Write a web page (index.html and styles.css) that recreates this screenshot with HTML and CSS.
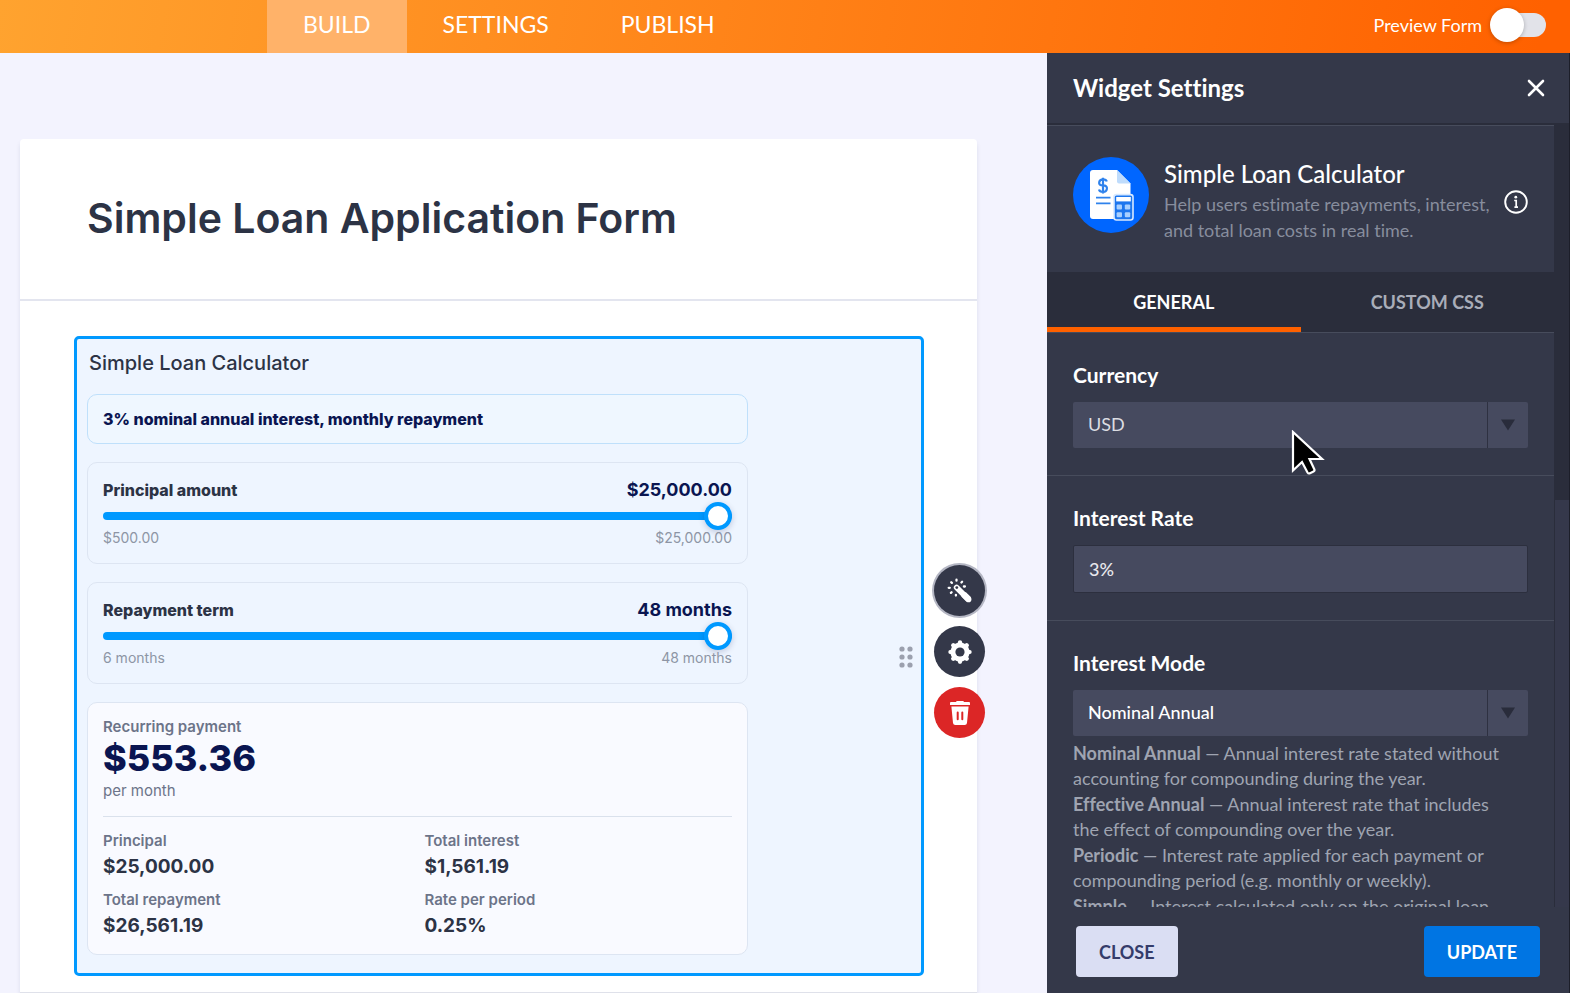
FILE: index.html
```html
<!DOCTYPE html>
<html lang="en">
<head>
<meta charset="utf-8">
<title>Form Builder</title>
<link rel="stylesheet" href="styles.css">
</head>
<body>
<header class="topbar">
  <nav class="topnav">
    <a class="topnav-link active" href="#build">BUILD</a>
    <a class="topnav-link" href="#settings">SETTINGS</a>
    <a class="topnav-link" href="#publish">PUBLISH</a>
  </nav>
  <label class="preview">Preview Form
    <input class="switch" type="checkbox">
  </label>
</header>
<div class="workspace">
  <main class="canvas">
    <div class="form-card">
      <h1 class="form-title">Simple Loan Application Form</h1>
      <section class="field">
        <h2 class="field-title">Simple Loan Calculator</h2>
        <div class="calc">
          <p class="info">3% nominal annual interest, monthly repayment</p>
          <div class="range-card">
            <div class="range-head"><label for="principal">Principal amount</label><output class="range-value">$25,000.00</output></div>
            <input class="range" id="principal" type="range" min="500" max="25000" value="25000">
            <div class="range-limits"><span>$500.00</span><span>$25,000.00</span></div>
          </div>
          <div class="range-card">
            <div class="range-head"><label for="term">Repayment term</label><output class="range-value">48 months</output></div>
            <input class="range" id="term" type="range" min="6" max="48" value="48">
            <div class="range-limits"><span>6 months</span><span>48 months</span></div>
          </div>
          <div class="result">
            <p class="result-label">Recurring payment</p>
            <p class="result-main">$553.36</p>
            <p class="result-unit">per month</p>
            <dl class="totals">
              <div><dt>Principal</dt><dd>$25,000.00</dd></div>
              <div><dt>Total interest</dt><dd>$1,561.19</dd></div>
              <div><dt>Total repayment</dt><dd>$26,561.19</dd></div>
              <div><dt>Rate per period</dt><dd>0.25%</dd></div>
            </dl>
          </div>
        </div>
        <svg class="grip" width="14" height="22" viewBox="0 0 14 22" fill="#9ba0ae" aria-hidden="true"><circle cx="3" cy="3" r="2.6"/><circle cx="11" cy="3" r="2.6"/><circle cx="3" cy="11" r="2.6"/><circle cx="11" cy="11" r="2.6"/><circle cx="3" cy="19" r="2.6"/><circle cx="11" cy="19" r="2.6"/></svg>
        <div class="actions">
          <button class="action focused" type="button" aria-label="Widget settings">
            <svg width="26" height="26" viewBox="0 0 26 26"><path d="M9.600 9.400 20.600 20.400" stroke="#fff" stroke-width="5.600" stroke-linecap="round"/><path d="M16.500 16.300 21.800 21.600" stroke="#fff" stroke-width="6.400" stroke-linejoin="round"/><path d="M21.600 21.400h.01" stroke="#fff" stroke-width="5.600" stroke-linecap="round"/><circle cx="9.800" cy="9.600" r="1.400" fill="#343849"/><g stroke="#fff" stroke-width="2.300" stroke-linecap="round"><path d="M9.500 1.700V2.700M4.200 4.200 4.900 4.900M15.100 3.800 14.400 4.500M1.700 9.800H2.800M16.900 8.500H17.900M3.900 14.900 4.600 14.200M8.900 16.800V17.600"/></g></svg>
          </button>
          <button class="action" type="button" aria-label="Properties">
            <svg width="26" height="26" viewBox="0 0 26 26"><g fill="#fff"><circle cx="13" cy="13" r="9.600"/><g id="t"><path d="M10.200 5 11.400 1.800Q13 .8 14.600 1.800L15.800 5ZM10.200 21 11.400 24.200Q13 25.200 14.600 24.200L15.800 21Z"/><path d="M10.200 5 11.400 1.800Q13 .8 14.600 1.800L15.800 5ZM10.200 21 11.400 24.200Q13 25.200 14.600 24.200L15.800 21Z" transform="rotate(90 13 13)"/></g><use href="#t" transform="rotate(45 13 13)"/></g><circle cx="13" cy="13" r="4.600" fill="#343849"/></svg>
          </button>
          <button class="action danger" type="button" aria-label="Delete">
            <svg width="26" height="26" viewBox="0 0 26 26"><path d="M9 2Q9.200 1 10.200 1h5.600Q16.800 1 17 2H22q1 0 1 1v2H3V3q0-1 1-1ZM4.400 6.400H21.600L20 23q-.3 2-2.300 2H8.300Q6.300 25 6 23Z" fill="#fff"/><path d="M10.700 12.400v6.800M15.300 12.400v6.800" stroke="#dc2626" stroke-width="2" stroke-linecap="round"/></svg>
          </button>
        </div>
      </section>
      <div class="next-field"></div>
    </div>
  </main>
  <aside class="panel">
    <div class="panel-head">
      <h2 class="panel-title">Widget Settings</h2>
      <button class="panel-x" type="button" aria-label="Close panel"><svg width="18" height="18" viewBox="0 0 18 18"><path d="M2 2 16 16M16 2 2 16" stroke="#fff" stroke-width="2.600" stroke-linecap="round"/></svg></button>
    </div>
    <div class="panel-scroll">
      <div class="panel-content">
        <div class="widget">
          <svg class="widget-icon" width="76" height="76" viewBox="0 0 76 76" aria-hidden="true"><circle cx="38" cy="38" r="38" fill="#0066ff"/><path d="M20 13H44L57.500 26.500V62H20q-3 0-3-3V16q0-3 3-3Z" fill="#fff"/><path d="M44 13 57.500 26.500H46q-2 0-2-2Z" fill="#bfdcfc"/><path d="M33.800 24.500Q33.200 22.400 30 22.400T26.200 25.300 30 28.400 33.900 31.800 30 34.900 26 32.400M30 20.800V36.600" fill="none" stroke="#2f82ec" stroke-width="2.200"/><path d="M23 40.600H37.500M23 46.300H37.500" stroke="#2f82ec" stroke-width="1.800"/><rect x="41" y="37.600" width="19" height="25.400" rx="2.500" fill="#1d76ee" stroke="#d8e9ff" stroke-width="1.600"/><rect x="43.200" y="40" width="14.600" height="4.400" fill="#fff"/><g fill="#a9d0ff"><rect x="43.600" y="47.500" width="5.400" height="5" rx="1"/><rect x="51.800" y="47.500" width="5.400" height="5" rx="1"/><rect x="43.600" y="55.300" width="5.400" height="5" rx="1"/><rect x="51.800" y="55.300" width="5.400" height="5" rx="1"/></g></svg>
          <div class="widget-text">
            <h3 class="widget-name">Simple Loan Calculator</h3>
            <p class="widget-desc">Help users estimate repayments, interest,<br>and total loan costs in real time.</p>
          </div>
          <svg class="widget-info" width="24" height="24" viewBox="0 0 24 24" aria-hidden="true"><circle cx="12" cy="12" r="10.800" fill="none" stroke="#fff" stroke-width="1.900"/><circle cx="11.800" cy="7.200" r="1.400" fill="#fff"/><path d="M10.200 10.500H12.200V17.400M10.400 17.200H14" fill="none" stroke="#fff" stroke-width="1.700"/></svg>
        </div>
        <div class="tabs">
          <button class="tab active" type="button">GENERAL</button>
          <button class="tab" type="button">CUSTOM CSS</button>
        </div>
        <div class="setting">
          <label class="setting-label" for="currency">Currency</label>
          <div class="select-box">
            <select class="select" id="currency"><option>USD</option></select>
            <span class="select-arrow"><svg width="14" height="12" viewBox="0 0 14 12"><path d="M0 .5H14L7 11.500Z" fill="#292c3b"/></svg></span>
          </div>
        </div>
        <div class="setting">
          <label class="setting-label" for="rate">Interest Rate</label>
          <input class="text-box" id="rate" type="text" value="3%">
        </div>
        <div class="setting">
          <label class="setting-label" for="mode">Interest Mode</label>
          <div class="select-box">
            <select class="select bright" id="mode"><option>Nominal Annual</option></select>
            <span class="select-arrow"><svg width="14" height="12" viewBox="0 0 14 12"><path d="M0 .5H14L7 11.500Z" fill="#292c3b"/></svg></span>
          </div>
          <div class="help">
            <p><b>Nominal Annual</b> — Annual interest rate stated without<br>accounting for compounding during the year.</p>
            <p><b>Effective Annual</b> — Annual interest rate that includes<br>the effect of compounding over the year.</p>
            <p><b>Periodic</b> — Interest rate applied for each payment or<br>compounding period (e.g. monthly or weekly).</p>
            <p><b>Simple</b> — Interest calculated only on the original loan</p>
          </div>
        </div>
      </div>
      <div class="track"><div class="thumb"></div></div>
    </div>
    <footer class="panel-foot">
      <button class="btn light" type="button">CLOSE</button>
      <button class="btn blue" type="button">UPDATE</button>
    </footer>
  </aside>
</div>
<svg class="pointer" width="36" height="48" viewBox="0 0 36 48" aria-hidden="true"><path d="M2 2V40.500L11 32 16.500 42.500Q17.500 44 19 43.200L22.500 41.600Q24 40.800 23.300 39.200L18.500 29H31Z" fill="#000" stroke="#fff" stroke-width="2.200"/></svg>
</body>
</html>
```
FILE: styles.css
```css
* { box-sizing: border-box; margin: 0; }
body {
  display: flex;
  flex-direction: column;
  height: 100vh;
  overflow: hidden;
  background: #f3f3fe;
  font-family: Inter, "Liberation Sans", sans-serif;
  color: #2c3345;
}
button, input, select { font: inherit; border: 0; padding: 0; }

.topbar {
  flex: none;
  display: flex;
  justify-content: space-between;
  height: 53px;
  padding: 0 24px 0 267px;
  background: linear-gradient(100deg, #ffa32f 0%, #ff6100 98%);
  color: #fff;
  font-family: Lato, "Liberation Sans", sans-serif;
}
.topnav { display: flex; }
.topnav-link {
  padding: 0 36px;
  color: #fff;
  font-size: 23px;
  line-height: 48px;
  text-decoration: none;
}
.topnav-link.active { background: #ffb269; }
.preview {
  display: flex;
  align-items: center;
  gap: 24px;
  height: 50px;
  font-size: 18px;
}
.switch {
  appearance: none;
  position: relative;
  width: 40px;
  height: 24px;
  border-radius: 12px;
  background: #e2e3e9;
}
.switch::before {
  content: "";
  position: absolute;
  left: -16px;
  top: -5px;
  width: 34px;
  height: 34px;
  border-radius: 50%;
  background: #fff;
  box-shadow: 0 1px 4px rgba(0, 0, 0, .25);
}

.workspace { flex: 1; display: flex; min-height: 0; }
.canvas { flex: 1; min-width: 0; padding: 86px 70px 0 20px; overflow: hidden; }
.form-card {
  background: #fff;
  border-radius: 4px;
  box-shadow: 0 4px 4px rgba(87, 100, 126, .14);
}
.form-title {
  height: 162px;
  padding: 0 67px;
  border-bottom: 2px solid #e3e5ef;
  font-size: 41px;
  font-weight: 600;
  line-height: 158px;
}
.field {
  position: relative;
  margin: 35px 53px 16px 54px;
  padding: 0 10px 18px;
  border: 3px solid #0099ff;
  border-radius: 5px;
  background: #eef5ff;
}
.field-title {
  padding: 12px 2px 19px;
  font-size: 20px;
  font-weight: 500;
  line-height: 24px;
}
.calc {
  display: flex;
  flex-direction: column;
  gap: 18px;
  max-width: 661px;
}
.info, .range-card, .result {
  padding: 0 15px;
  border: 1px solid #dde5f2;
  border-radius: 10px;
}
.info {
  border-color: #bfe0fb;
  background: #eff7ff;
  color: #0a1551;
  font-size: 16px;
  font-weight: 800;
  line-height: 48px;
}
.range-card { padding-top: 15px; padding-bottom: 17px; }
.range-head, .range-limits { display: flex; justify-content: space-between; }
.range-head { font-size: 16px; font-weight: 800; line-height: 24px; }
.range-value { color: #0a1551; font-size: 18px; font-weight: 700; }
.range {
  display: block;
  appearance: none;
  width: 100%;
  height: 28px;
  background: none;
}
.range::-webkit-slider-runnable-track {
  height: 8px;
  border-radius: 4px;
  background: #0099ff;
}
.range::-webkit-slider-thumb {
  appearance: none;
  width: 28px;
  height: 28px;
  margin-top: -10px;
  border: 4px solid #0099ff;
  border-radius: 50%;
  background: #fff;
  box-shadow: 0 2px 6px rgba(10, 21, 81, .2);
}
.range-limits { color: #8d95a5; font-size: 14px; line-height: 16px; }
.result { padding-top: 14px; padding-bottom: 14px; background: #f9faff; }
.result-label, .totals dt { color: #6c7489; font-size: 15px; font-weight: 600; line-height: 20px; }
.result-main { color: #0a1551; font-size: 36px; font-weight: 800; line-height: 42px; }
.result-unit { color: #6c7489; font-size: 15px; line-height: 24px; }
.totals {
  display: grid;
  grid-template-columns: 1fr 1fr;
  gap: 9px 14px;
  margin-top: 13px;
  padding-top: 14px;
  border-top: 1px solid #dae1ec;
}
.totals dd { margin-top: 2px; font-size: 19px; font-weight: 700; line-height: 28px; }
.grip { position: absolute; right: 8px; top: 307px; }
.actions {
  position: absolute;
  right: -64px;
  top: 226px;
  display: flex;
  flex-direction: column;
  gap: 10px;
}
.action {
  display: grid;
  place-items: center;
  width: 51px;
  height: 51px;
  border-radius: 50%;
  background: #343849;
}
.action.focused { box-shadow: 0 0 0 2px #b4b6c3; }
.action.danger { background: #dc2626; }
.next-field { height: 60px; border-top: 1px solid #dfe1ea; }

.panel {
  flex: none;
  display: flex;
  flex-direction: column;
  width: 523px;
  border-right: 1px solid #1c1e29;
  background: #343849;
  color: #fff;
  font-family: Lato, "Liberation Sans", sans-serif;
  font-variant-ligatures: none;
}
.panel-head {
  flex: none;
  display: flex;
  justify-content: space-between;
  align-items: center;
  height: 72px;
  padding: 0 24px 0 26px;
  border-bottom: 2px solid #2a2d3b;
}
.panel-title { font-size: 24px; font-weight: 700; line-height: 28px; }
.panel-x { display: grid; background: none; }
.panel-scroll { flex: 1; display: flex; min-height: 0; overflow: hidden; }
.panel-content { flex: 1; min-width: 0; }
.track { flex: none; width: 15px; padding-top: 375px; background: #2a2d3b; }
.thumb { height: 100%; border-left: 1px solid #2a2d3b; background: #35384b; }
.widget {
  display: flex;
  height: 147px;
  padding: 31px 26px 0;
  border-top: 1px solid #474c5c;
}
.widget-icon { flex: none; }
.widget-text { flex: 1; padding-left: 15px; white-space: nowrap; }
.widget-name { font-size: 24px; font-weight: 500; line-height: 34px; }
.widget-desc { color: #878d9d; font-size: 18px; line-height: 26px; }
.widget-info { flex: none; margin-top: 33px; }
.tabs { display: flex; height: 60px; background: #2a2d3b; }
.tab {
  flex: 1;
  padding-top: 4px;
  border-bottom: 5px solid transparent;
  background: none;
  color: #a9adb9;
  font-size: 18px;
  font-weight: 700;
}
.tab.active { border-color: #ff6100; color: #fff; }
.setting { padding: 29px 26px 27px; border-top: 1px solid #474c5c; }
.setting-label { display: block; margin-bottom: 14px; font-size: 21px; font-weight: 700; line-height: 26px; }
.select-box { display: grid; grid-template-columns: 1fr 41px; height: 46px; }
.select {
  grid-area: 1 / 1 / 2 / 3;
  appearance: none;
  width: 100%;
  height: 46px;
  padding: 0 56px 2px 15px;
  border-radius: 2px;
  background: #464a5f;
  color: #dcdde2;
  font-size: 18px;
}
.select.bright { color: #fff; font-weight: 500; }
.select-arrow {
  grid-area: 1 / 2;
  display: grid;
  place-items: center;
  border-left: 1px solid #2e3141;
  pointer-events: none;
}
.text-box {
  display: block;
  width: 100%;
  height: 48px;
  padding: 0 15px;
  border: 1px solid #2c2f3e;
  border-radius: 2px;
  background: #464a5f;
  color: #e8e8ec;
  font-size: 18px;
  font-weight: 500;
}
.help {
  display: flex;
  flex-direction: column;
  gap: 1px;
  margin-top: 5px;
  color: #9fa4b1;
  font-size: 18px;
  line-height: 25px;
  white-space: nowrap;
}
.panel-foot {
  flex: none;
  display: flex;
  justify-content: space-between;
  height: 86px;
  padding: 19px 29px 0;
  background: #343849;
}
.btn {
  height: 51px;
  padding: 0 23px;
  border-radius: 4px;
  font-size: 18px;
  font-weight: 700;
}
.btn.light { background: #dadef3; color: #343c6a; }
.btn.blue { background: #0075e3; color: #fff; }
.pointer { position: absolute; left: 1291px; top: 430px; }
```
